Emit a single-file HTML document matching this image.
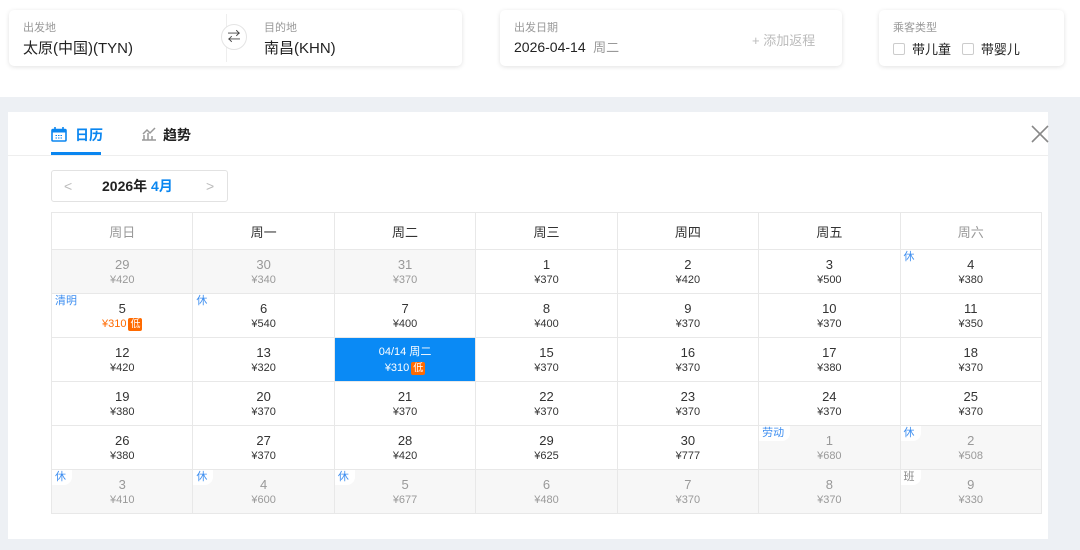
<!DOCTYPE html>
<html><head><meta charset="utf-8"><style>
*{margin:0;padding:0;box-sizing:border-box}
body{width:1080px;height:550px;background:#fff;font-family:"Liberation Sans","Noto Sans CJK SC",sans-serif;position:relative;overflow:hidden;color:#333}
.card{position:absolute;top:10px;height:56px;background:#fff;border-radius:5px;box-shadow:0 1px 5px rgba(0,0,0,.12)}
.lbl{position:absolute;top:9px;font-size:11px;color:#999}
.val{position:absolute;top:27px;font-size:15px;color:#222}
.band{position:absolute;left:0;top:97px;width:1080px;height:453px;background:#edf0f4}
.panel{position:absolute;left:8px;top:112px;width:1040px;height:427px;background:#fff}
table{position:absolute;left:51px;top:212px;border-collapse:collapse;table-layout:fixed;width:991px}
td,th{border:1px solid #e8e8e8;text-align:center;position:relative}
th{height:37px;font-weight:normal;font-size:13px;color:#333}
td{height:44px;font-size:13px;line-height:17px;color:#333}
td small{display:block;font-size:11px;line-height:15px}
td.g{background:#f7f7f7;color:#999}
td.s{background:#0a8af5;color:#fff}
.t{position:absolute;left:0;top:0;font-size:11px;line-height:14px;color:#3d8ef0;background:#fff;padding:0 6px 1px 3px;border-radius:0 0 8px 0}
.low{display:inline-block;background:#ff6a00;color:#fff;font-size:10px;line-height:13px;padding:0 2px;border-radius:2px;margin-left:2px}
.chk{display:inline-block;width:12px;height:12px;border:1px solid #ccc;border-radius:2px;vertical-align:-1px;margin-right:7px}
</style></head><body>
<div class="card" style="left:9px;width:453px">
 <div class="lbl" style="left:14px">出发地</div><div class="val" style="left:14px">太原(中国)(TYN)</div>
 <div style="position:absolute;left:217px;top:4px;width:1px;height:48px;background:#eee"></div>
 <div style="position:absolute;left:212px;top:14px;width:26px;height:26px;border-radius:50%;border:1px solid #e4e4e4;background:#fff;text-align:center;font-size:13px;line-height:24px;color:#444">⇄</div>
 <div class="lbl" style="left:255px">目的地</div><div class="val" style="left:255px">南昌(KHN)</div>
</div>
<div class="card" style="left:500px;width:342px">
 <div class="lbl" style="left:14px">出发日期</div><div class="val" style="left:14px;font-size:14px">2026-04-14 <span style="color:#999;font-size:13px">&nbsp;周二</span></div>
 <div style="position:absolute;left:252px;top:20px;font-size:13px;color:#bbb">+ 添加返程</div>
</div>
<div class="card" style="left:879px;width:185px">
 <div class="lbl" style="left:14px">乘客类型</div>
 <div class="val" style="left:14px;font-size:13px;top:29px"><span class="chk"></span>带儿童 &nbsp;&nbsp;<span class="chk"></span>带婴儿</div>
</div>
<div class="band"></div>
<div class="panel">
 <div style="position:absolute;left:43px;top:13px;font-size:14px;font-weight:bold;color:#0a86f0"><svg width="16" height="15" viewBox="0 0 16 15" style="vertical-align:-2px;margin-right:8px"><rect x="1" y="2.5" width="14" height="11.5" rx="1" fill="none" stroke="#0a86f0" stroke-width="1.6"/><rect x="1" y="2.5" width="14" height="3" fill="#0a86f0"/><path d="M4 0v3M12 0v3" stroke="#0a86f0" stroke-width="1.6"/><path d="M4.5 8.5h7M4.5 11h7" stroke="#0a86f0" stroke-width="1" stroke-dasharray="1.5 1"/></svg>日历</div>
 <div style="position:absolute;left:43px;top:40px;width:50px;height:3px;background:#0a86f0"></div>
 <div style="position:absolute;left:133px;top:13px;font-size:14px;font-weight:bold;color:#222"><svg width="16" height="14" viewBox="0 0 16 14" style="vertical-align:-1px;margin-right:6px"><path d="M1 13h14M3 13V8M7 13V6M11 13V9M2 7l4-4 3 3 5-5" stroke="#999" stroke-width="1.5" fill="none"/></svg>趋势</div>
 <div style="position:absolute;left:0;top:43px;width:1040px;height:1px;background:#eee"></div>
 <svg style="position:absolute;left:1023px;top:13px" width="18" height="18" viewBox="0 0 18 18"><path d="M1 1L17 17M17 1L1 17" stroke="#888" stroke-width="1.6"/></svg>
 <div style="position:absolute;left:43px;top:58px;width:177px;height:32px;border:1px solid #e2e2e2;border-radius:3px;font-size:14px;line-height:30px">
  <span style="position:absolute;left:12px;color:#bbb">&lt;</span>
  <span style="position:absolute;left:50px;font-weight:bold;color:#222">2026年 <span style="color:#0a86f0">4月</span></span>
  <span style="position:absolute;left:154px;color:#bbb">&gt;</span>
 </div>
</div>
<table>
<tr><th style="color:#999">周日</th><th>周一</th><th>周二</th><th>周三</th><th>周四</th><th>周五</th><th style="color:#999">周六</th></tr>
<tr><td class="g">29<small>¥420</small></td><td class="g">30<small>¥340</small></td><td class="g">31<small>¥370</small></td><td>1<small>¥370</small></td><td>2<small>¥420</small></td><td>3<small>¥500</small></td><td><span class="t">休</span>4<small>¥380</small></td></tr>
<tr><td><span class="t">清明</span>5<small style="color:#ff6a00">¥310<span class="low">低</span></small></td><td><span class="t">休</span>6<small>¥540</small></td><td>7<small>¥400</small></td><td>8<small>¥400</small></td><td>9<small>¥370</small></td><td>10<small>¥370</small></td><td>11<small>¥350</small></td></tr>
<tr><td>12<small>¥420</small></td><td>13<small>¥320</small></td><td class="s" style="font-size:11px">04/14 周二<small>¥310<span class="low">低</span></small></td><td>15<small>¥370</small></td><td>16<small>¥370</small></td><td>17<small>¥380</small></td><td>18<small>¥370</small></td></tr>
<tr><td>19<small>¥380</small></td><td>20<small>¥370</small></td><td>21<small>¥370</small></td><td>22<small>¥370</small></td><td>23<small>¥370</small></td><td>24<small>¥370</small></td><td>25<small>¥370</small></td></tr>
<tr><td>26<small>¥380</small></td><td>27<small>¥370</small></td><td>28<small>¥420</small></td><td>29<small>¥625</small></td><td>30<small>¥777</small></td><td class="g"><span class="t">劳动</span>1<small>¥680</small></td><td class="g"><span class="t">休</span>2<small>¥508</small></td></tr>
<tr><td class="g"><span class="t">休</span>3<small>¥410</small></td><td class="g"><span class="t">休</span>4<small>¥600</small></td><td class="g"><span class="t">休</span>5<small>¥677</small></td><td class="g">6<small>¥480</small></td><td class="g">7<small>¥370</small></td><td class="g">8<small>¥370</small></td><td class="g"><span class="t" style="color:#888">班</span>9<small>¥330</small></td></tr>
</table>
</body></html>
